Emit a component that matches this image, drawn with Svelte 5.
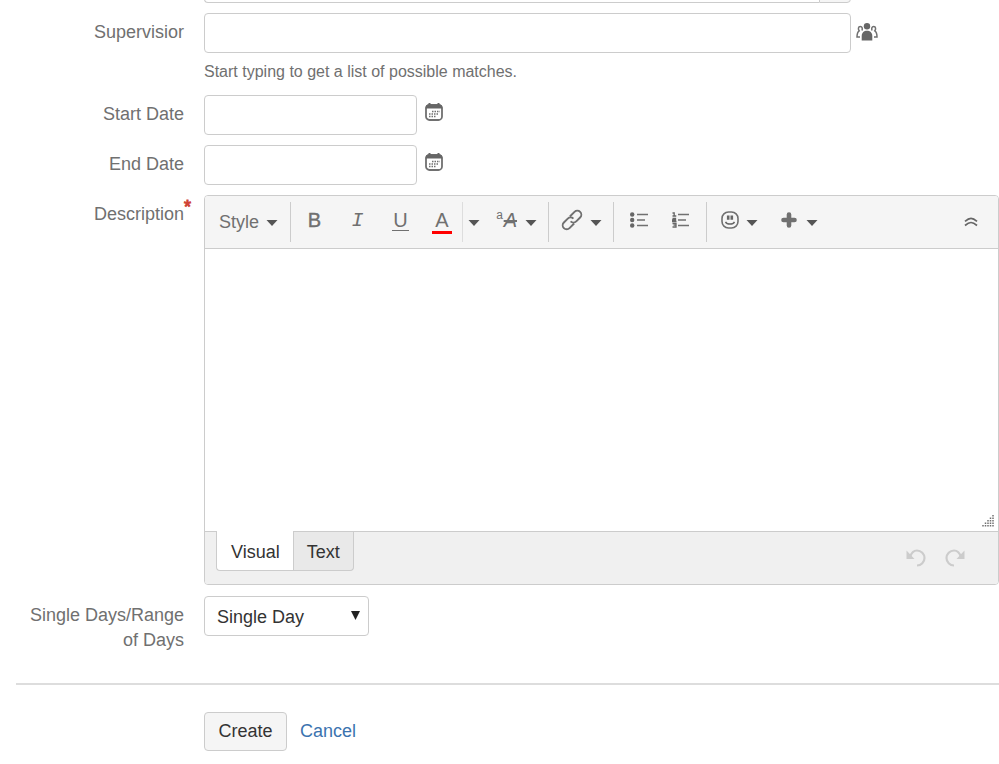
<script lang="ts">
  let supervisor = $state("");
  let startDate = $state("");
  let endDate = $state("");
  let description = $state("");
  let dayType = $state("single");
  let mode = $state<"visual" | "text">("visual");
</script>

{#snippet caret()}
  <svg class="caret" width="12" height="6" viewBox="0 0 12 6"><path d="M.5 0h11L6 6z" /></svg>
{/snippet}

{#snippet calendar()}
  <svg width="18" height="18" viewBox="0 0 18 18">
    <rect x="1" y="2" width="16" height="15" rx="3.500" fill="#fff" stroke="#707070" stroke-width="1.800" />
    <path d="M.5 5.500V4.500a3 3 0 0 1 3-3h11a3 3 0 0 1 3 3v1z" fill="#666" />
    <path d="M4.500 0v2M13.500 0v2" stroke="#666" stroke-width="2" />
    <path d="M7 8.500h8M4 11h10M4 13.500h7" stroke="#707070" stroke-width="1.500" stroke-dasharray="1.500 1" />
  </svg>
{/snippet}

<form onsubmit={(e) => e.preventDefault()}>
  <div class="row previous">
    <div class="label"></div>
    <div class="combo">
      <input type="text" aria-label="Assignee" />
      <span class="addon"></span>
    </div>
  </div>

  <div class="row supervisor">
    <label class="label" for="supervisor">Supervisior</label>
    <div class="field">
      <div class="line">
        <input id="supervisor" class="wide" type="text" bind:value={supervisor} />
        <button type="button" class="picker people" aria-label="Pick a user">
          <svg width="22" height="18" viewBox="0 0 22 18">
            <circle cx="11" cy="3.300" r="3.200" fill="#666" />
            <path d="M5.700 17.500v-4.500c0-3.400 2.300-5.300 5.300-5.300s5.300 1.900 5.300 5.300v4.500z" fill="#666" />
            <g fill="none" stroke="#707070" stroke-width="1.500">
              <path d="M4 14H1c0-3 .3-5 2.200-6.200C2 6.500 2 3.500 4.300 3.500c2 0 2.300 2 1.700 4" />
              <path d="M18 14h3c0-3-.3-5-2.200-6.200C20 6.500 20 3.500 17.700 3.500c-2 0-2.300 2-1.700 4" />
            </g>
          </svg>
        </button>
      </div>
      <p class="hint">Start typing to get a list of possible matches.</p>
    </div>
  </div>

  <div class="row">
    <label class="label" for="start">Start Date</label>
    <div class="line">
      <input id="start" class="date" type="text" bind:value={startDate} />
      <button type="button" class="picker" aria-label="Select a start date">{@render calendar()}</button>
    </div>
  </div>

  <div class="row">
    <label class="label" for="end">End Date</label>
    <div class="line">
      <input id="end" class="date" type="text" bind:value={endDate} />
      <button type="button" class="picker" aria-label="Select an end date">{@render calendar()}</button>
    </div>
  </div>

  <div class="row description">
    <label class="label" for="description">Description<span class="required">*</span></label>
    <div class="editor">
      <div class="toolbar">
        <div class="group style">
          <button type="button">Style {@render caret()}</button>
        </div>
        <div class="group text">
          <button type="button" class="bold">B</button>
          <button type="button" class="italic">I</button>
          <button type="button" class="under"><span>U</span></button>
          <button type="button" class="color"><span>A</span></button>
          <button type="button" class="more" aria-label="More colors">{@render caret()}</button>
          <button type="button" class="menu" aria-label="More formatting">
            <span class="format"><small>a</small><em>A</em></span>
            {@render caret()}
          </button>
        </div>
        <div class="group">
          <button type="button" class="menu" aria-label="Link">
            <svg width="22" height="22" viewBox="0 0 22 22">
              <g fill="none" stroke="#707070" stroke-width="1.900" transform="rotate(-45 11 11)">
                <path d="M10 15H3.500a4 4 0 0 1 0-8H9a4 4 0 0 1 4 4" />
                <path d="M12 7h6.500a4 4 0 0 1 0 8H13a4 4 0 0 1-4-4" />
              </g>
            </svg>
            {@render caret()}
          </button>
        </div>
        <div class="group lists">
          <button type="button" aria-label="Bullet list">
            <svg width="18" height="16" viewBox="0 0 18 16">
              <g fill="#666"><circle cx="2.200" cy="2.500" r="2.200" /><circle cx="2.200" cy="8" r="2.200" /><circle cx="2.200" cy="13.500" r="2.200" /></g>
              <path d="M7 2.500h11M7 8h8M7 13.500h11" stroke="#707070" stroke-width="1.600" />
            </svg>
          </button>
          <button type="button" aria-label="Numbered list">
            <svg width="18" height="16" viewBox="0 0 18 16">
              <path d="M.5 1H2.200v3M.5 4h3.800M.5 6.500h3V8h-3v1.500h4M.5 11.500h3.500v3.500H.5M1.500 13.200h2" fill="none" stroke="#666" stroke-width="1.300" />
              <path d="M6 2.500h11M6 8h8M6 13.500h11" stroke="#707070" stroke-width="1.600" />
            </svg>
          </button>
        </div>
        <div class="group">
          <button type="button" class="menu" aria-label="Emoji">
            <svg width="18" height="18" viewBox="0 0 18 18">
              <rect x="1" y="1" width="16" height="16" rx="6.500" fill="none" stroke="#707070" stroke-width="1.600" />
              <path d="M7.200 4.500v4.300M10.800 4.500v4.300" stroke="#666" stroke-width="2.600" />
              <path d="M4.500 10.800c1.600 3 7.400 3 9 0" fill="none" stroke="#666" stroke-width="1.500" />
            </svg>
            {@render caret()}
          </button>
          <button type="button" class="menu plus" aria-label="Insert more">
            <svg width="16" height="16" viewBox="0 0 16 16"><path d="M8 2.500v11M2.500 8h11" stroke="#707070" stroke-width="4.600" stroke-linecap="round" /></svg>
            {@render caret()}
          </button>
        </div>
        <button type="button" class="collapse" aria-label="Collapse toolbar">
          <svg width="14" height="10" viewBox="0 0 14 10"><path d="M1 4.300Q4.500 1.300 7 1.300t6 3M1 8.500q3.500-3 6-3t6 3" fill="none" stroke="#666" stroke-width="1.700" /></svg>
        </button>
      </div>

      <div class="body">
        <textarea id="description" bind:value={description}></textarea>
        <svg class="grip" width="13" height="13" viewBox="0 0 13 13">
          <path d="M12 1v12M9.500 3.500V13M7 6v7M4.500 8.500V13M2 11v2" stroke="#707070" stroke-width="1.500" stroke-dasharray="1.500 1" />
        </svg>
      </div>

      <div class="footer">
        <div class="tabs">
          <button type="button" class:active={mode === "visual"} onclick={() => (mode = "visual")}>Visual</button>
          <button type="button" class:active={mode === "text"} onclick={() => (mode = "text")}>Text</button>
        </div>
        <div class="history">
          <button type="button" aria-label="Undo" disabled>
            <svg width="20" height="18" viewBox="0 0 20 18">
              <path d="M4 8C5.500 3.500 8 1.500 11 1.500a7.500 7.500 0 0 1 0 15" fill="none" stroke="#ccc" stroke-width="2.200" />
              <path d="M.5 1.500V10H8.500z" fill="#ccc" />
            </svg>
          </button>
          <button type="button" aria-label="Redo" disabled>
            <svg width="20" height="18" viewBox="0 0 20 18">
              <path d="M16 8C14.500 3.500 12 1.500 9 1.500a7.500 7.500 0 0 0 0 15" fill="none" stroke="#ccc" stroke-width="2.200" />
              <path d="M19.500 1.500V10H11.500z" fill="#ccc" />
            </svg>
          </button>
        </div>
      </div>
    </div>
  </div>

  <div class="row">
    <label class="label" for="days">Single Days/Range of Days</label>
    <div class="select">
      <select id="days" bind:value={dayType}>
        <option value="single">Single Day</option>
        <option value="range">Range of Days</option>
      </select>
      <svg width="9" height="9" viewBox="0 0 9 9"><path d="M0 0h9L4.500 9z" fill="#222" /></svg>
    </div>
  </div>

  <div class="actions">
    <button type="submit" class="create">Create</button>
    <a href="#cancel">Cancel</a>
  </div>
</form>

<style>
  :global(body) { background: #fff; overflow: hidden; }
  form {
    margin-top: -37px;
    padding-left: 16px;
    font: 18px/25px "Liberation Sans", Arial, sans-serif;
    color: #333;
  }
  input, textarea, select, button { font: inherit; color: inherit; box-sizing: border-box; }
  button { border: 0; background: none; padding: 0; cursor: pointer; }
  svg { display: block; flex-shrink: 0; }

  .row { display: flex; align-items: flex-start; gap: 20px; margin-bottom: 10px; }
  .label {
    position: relative;
    flex: 0 0 168px;
    padding-top: 7px;
    text-align: right;
    color: #707070;
  }
  .required { position: absolute; top: 0; left: 100%; color: #d04437; -webkit-text-stroke: 1px #d04437; }
  .field { flex: 1; min-width: 0; }
  .line { display: flex; flex: 1; min-width: 0; }
  input {
    height: 40px;
    padding: 0 12px;
    border: 1px solid #ccc;
    border-radius: 4px;
    background: #fff;
  }
  .combo { display: flex; flex: 0 1 647px; }
  .combo input { flex: 1; min-width: 0; border-radius: 4px 0 0 4px; border-right: 0; }
  .addon {
    width: 32px;
    box-sizing: border-box;
    border: 1px solid #ccc;
    border-radius: 0 4px 4px 0;
    background: #f5f5f5;
  }
  .wide { flex: 0 1 647px; min-width: 0; }
  .date { width: 213px; }
  .picker { align-self: flex-start; margin: 8px 0 0 8px; }
  .people { margin: 10px 0 0 5px; }
  .hint { margin: 7px 0 0; font-size: 16px; line-height: 24px; color: #707070; }
  .supervisor { margin-bottom: 11px; }
  .description { margin-bottom: 11px; }

  .editor {
    flex: 1;
    min-width: 0;
    border: 1px solid #ccc;
    border-radius: 4px;
    overflow: hidden;
  }
  .toolbar {
    display: flex;
    align-items: center;
    height: 52px;
    background: #f5f5f5;
    border-bottom: 1px solid #ccc;
    color: #707070;
  }
  .group { display: flex; height: 40px; border-right: 1px solid #ccc; }
  .group:nth-last-child(2) { border-right: 0; }
  .group button { display: flex; align-items: center; justify-content: center; width: 43px; height: 36px; }
  .caret { fill: #555; margin-top: 5px; }
  .group.style button { width: 85px; height: 40px; padding-left: 2px; gap: 7px; }
  .style .caret { margin-top: 2px; }
  .group.text { padding-left: 2px; }
  .bold { font-size: 20px; -webkit-text-stroke: 1px #707070; }
  .group .bold, .group .italic { -webkit-text-stroke-width: thin; }
  .group .bold { font-weight: normal; }
  .group .italic { font: italic 20px "Liberation Mono", monospace; -webkit-text-stroke: 0 #707070; }
  .under span { width: 17px; font-size: 20px; line-height: 20px; border-bottom: 1px solid #707070; }
  .group .color { width: 41px; height: 40px; border-right: 1px solid #ddd; }
  .color span { width: 20px; font-size: 20px; line-height: 21px; border-bottom: 3px solid #f00; }
  .group .more { width: 22px; }
  .group .menu { width: 64px; gap: 7px; }
  .group.text .menu { width: 63px; }
  .group .plus { width: 56px; gap: 9px; }
  .format { display: flex; text-decoration: none; }
  .format small { font-size: 12px; line-height: 12px; }
  .format em { width: 15px; font-size: 20px; line-height: 22px; text-decoration: line-through; }
  .group.lists { padding: 0 4px; }
  .group.lists button { width: 42px; }
  .collapse { margin-left: auto; padding: 0 20px; }

  .body { position: relative; }
  textarea {
    display: block;
    width: 100%;
    height: 282px;
    padding: 12px;
    border: 0;
    outline: 0;
    resize: none;
    background: #fff;
  }
  .grip { position: absolute; right: 4px; bottom: 4px; }
  .footer {
    display: flex;
    justify-content: space-between;
    height: 52px;
    padding: 0 33px 0 11px;
    background: #f0f0f0;
    border-top: 1px solid #ccc;
  }
  .tabs { display: flex; height: 39px; }
  .tabs button {
    padding: 2px 13px 0;
    background: #e9e9e9;
    border: 1px solid #ccc;
    border-top: 0;
    border-radius: 0 0 4px 0;
  }
  .tabs button:first-child { border-right: 0; border-radius: 0 0 0 4px; padding: 3px 13px 0 14px; }
  .tabs .active { margin-top: -1px; background: #fff; }
  .history { display: flex; align-items: center; gap: 19px; }

  .select { position: relative; }
  select {
    display: block;
    appearance: none;
    width: 165px;
    height: 40px;
    padding: 2px 32px 0 12px;
    border: 1px solid #ccc;
    border-radius: 4px;
    background: #fff;
  }
  .select svg { position: absolute; right: 9px; top: 15px; pointer-events: none; }

  .actions {
    display: flex;
    align-items: center;
    gap: 13px;
    margin-top: 30px;
    padding: 27px 0 13px 188px;
    border-top: 2px solid #ddd;
  }
  .create {
    width: 83px;
    height: 39px;
    border: 1px solid #ccc;
    border-radius: 4px;
    background: #f5f5f5;
  }
  a { color: #3b73af; text-decoration: none; }
</style>
